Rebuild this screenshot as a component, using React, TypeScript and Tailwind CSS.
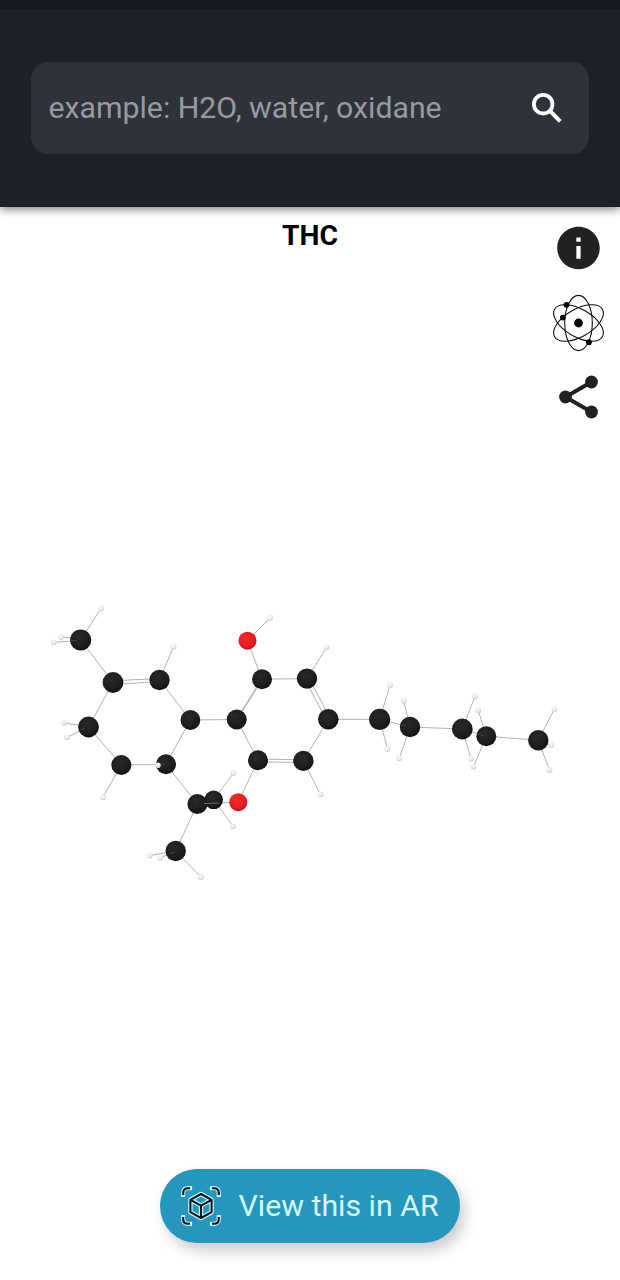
import { MdInfo } from 'react-icons/md';

type Element = 'C' | 'O' | 'H';

interface Atom {
    el: Element;
    x: number;
    y: number;
    r: number;
}

const carbons: [number, number, number][] = [
    [80.7, 640, 10.6],
    [113, 682.5, 10.4],
    [159.5, 680, 10.2],
    [88.5, 727, 10.4],
    [190.4, 720, 9.9],
    [121.3, 765, 10],
    [166, 764.3, 10],
    [213.7, 799.8, 9.3],
    [197.4, 804, 10],
    [175.7, 851, 10.2],
    [236.7, 719.5, 10],
    [262, 679.2, 10],
    [307, 678.6, 10.2],
    [328.3, 719.3, 10.3],
    [303.4, 760.9, 10.2],
    [258, 760.3, 10],
    [410, 727, 10.2],
    [379.7, 719.4, 10.6],
    [486.3, 736.3, 10],
    [462.3, 729, 10.4],
    [538.3, 740.2, 10.2],
];

const oxygens: [number, number, number][] = [
    [247.5, 640.7, 9],
    [238.3, 802.2, 9],
];

const hydrogens: [number, number][] = [
    [101, 608.5],
    [61, 637],
    [53.7, 642.3],
    [173.5, 646.7],
    [64, 722.8],
    [67, 737.3],
    [103, 797.2],
    [233.5, 773],
    [233, 826.3],
    [149.8, 855.5],
    [160, 858],
    [201, 877],
    [270, 618],
    [326.7, 647.3],
    [320.5, 794.5],
    [390, 685.2],
    [387.5, 749],
    [403.7, 700.8],
    [399.3, 758.3],
    [475, 696.3],
    [471, 758.8],
    [478.3, 710.3],
    [473.5, 766.5],
    [554.3, 709.3],
    [549.5, 770],
];

const atoms: Atom[] = [
    ...hydrogens.map(([x, y]): Atom => ({ el: 'H', x, y, r: 2.9 })),
    ...carbons.map(([x, y, r]): Atom => ({ el: 'C', x, y, r })),
    ...oxygens.map(([x, y, r]): Atom => ({ el: 'O', x, y, r })),
];

// x1, y1, x2, y2
const bonds: [number, number, number, number][] = [
    [80.7, 640, 101, 608.5],
    [80.7, 639, 61, 637],
    [80.7, 640.5, 53.7, 642.3],
    [80.7, 640, 113, 682.5],
    [113, 680.8, 159.5, 678.5],
    [113, 684.5, 159.5, 681.5],
    [159.5, 680, 173.5, 646.7],
    [159.5, 680, 190.4, 720],
    [113, 682.5, 88.5, 727],
    [88.5, 727, 64, 722.8],
    [88.5, 727, 67, 737.3],
    [88.5, 727, 121.3, 765],
    [121.3, 765, 103, 797.2],
    [121.3, 764.7, 166, 764.7],
    [166, 764.3, 190.4, 720],
    [166, 764.3, 197.4, 804],
    [197.4, 804, 175.7, 851],
    [197.4, 804, 238.3, 802.2],
    [213.7, 799.8, 233.5, 773],
    [213.7, 799.8, 233, 826.3],
    [175.7, 851, 149.8, 855.5],
    [175.7, 851, 160, 858],
    [175.7, 851, 201, 877],
    [190.4, 720, 236.7, 719.5],
    [236.4, 719.2, 261.7, 679],
    [237.1, 719.8, 262.3, 679.5],
    [262, 679.2, 247.5, 640.7],
    [247.5, 640.7, 270, 618],
    [262, 679.2, 307, 678.6],
    [307, 678.6, 326.7, 647.3],
    [308.8, 677.7, 330.2, 718.4],
    [305.2, 679.7, 326.5, 720.2],
    [328.3, 719.3, 303.4, 760.9],
    [303.4, 760.9, 320.5, 794.5],
    [258, 759.2, 303.4, 759.6],
    [258, 762, 303.4, 762.3],
    [258, 760.3, 236.7, 719.5],
    [258, 760.3, 238.3, 802.2],
    [328.3, 719.3, 379.7, 719.4],
    [379.7, 719.4, 390, 685.2],
    [379.7, 719.4, 387.5, 749],
    [379.7, 719.4, 410, 727],
    [410, 727, 403.7, 700.8],
    [410, 727, 399.3, 758.3],
    [410, 727, 462.3, 729],
    [462.3, 729, 475, 696.3],
    [462.3, 729, 471, 758.8],
    [462.3, 729, 486.3, 736.3],
    [486.3, 736.3, 478.3, 710.3],
    [486.3, 736.3, 473.5, 766.5],
    [486.3, 736.3, 538.3, 740.2],
    [538.3, 740.2, 554.3, 709.3],
    [538.3, 740.2, 549.5, 770],
    [538.3, 740.2, 551.3, 745.3],
];

// Faint bond ends that show over the carbon spheres
const glints: [number, number, number, number][] = [
    [71, 640.8, 77, 640.4],
    [81, 730, 85, 728.5],
    [161, 764.8, 165, 763.8],
    [170, 853.7, 175, 852],
    [401, 725, 406, 726],
    [478, 734, 483, 735.5],
];

function Molecule() {
    return (
        <svg viewBox="0 590 620 300" className="block h-[300px] w-full">
            <defs>
                <radialGradient id="C" cx="0.42" cy="0.35" r="0.65">
                    <stop offset="0" stopColor="#292929" />
                    <stop offset="0.7" stopColor="#1d1d1d" />
                    <stop offset="1" stopColor="#121212" />
                </radialGradient>
                <radialGradient id="O" cx="0.42" cy="0.35" r="0.65">
                    <stop offset="0" stopColor="#f5292b" />
                    <stop offset="0.7" stopColor="#e51e21" />
                    <stop offset="1" stopColor="#c41518" />
                </radialGradient>
                <radialGradient id="H" cx="0.42" cy="0.35" r="0.65">
                    <stop offset="0" stopColor="#fafafa" />
                    <stop offset="0.6" stopColor="#e9e9e9" />
                    <stop offset="1" stopColor="#cccccc" />
                </radialGradient>
            </defs>
            <g stroke="#a9a9a9" strokeWidth="0.9">
                {bonds.map(([x1, y1, x2, y2], i) => (
                    <line key={i} x1={x1} y1={y1} x2={x2} y2={y2} />
                ))}
            </g>
            {atoms.map((a, i) => (
                <circle key={i} cx={a.x} cy={a.y} r={a.r} fill={`url(#${a.el})`} />
            ))}
            <g stroke="#4a4a4a" strokeWidth="0.9">
                {glints.map(([x1, y1, x2, y2], i) => (
                    <line key={i} x1={x1} y1={y1} x2={x2} y2={y2} />
                ))}
            </g>
            <line x1="204" y1="803.6" x2="219" y2="803" stroke="#777777" strokeWidth="0.9" />
            {/* hydrogens in front of their carbon */}
            <circle cx="158" cy="765.3" r="2.8" fill="url(#H)" />
            <circle cx="551.5" cy="745.3" r="2.7" fill="url(#H)" />
        </svg>
    );
}

function SearchIcon() {
    return (
        <svg viewBox="0 0 30 30" className="size-[30px]" fill="none" stroke="white">
            <circle cx="11.2" cy="11.2" r="9.3" strokeWidth="3.8" />
            <path d="M17.6 17.6 28.3 28.3" strokeWidth="4" />
        </svg>
    );
}

function AtomIcon() {
    return (
        <svg viewBox="-28.5 -29 57 58" className="h-[58px] w-[57px]">
            <g fill="none" stroke="#111111" strokeWidth="1.1">
                <ellipse rx="13.8" ry="27.6" />
                <ellipse rx="13.8" ry="27.6" transform="rotate(60)" />
                <ellipse rx="13.8" ry="27.6" transform="rotate(-60)" />
            </g>
            <circle r="4.4" />
            <circle cx="-12" cy="-18.2" r="2.9" />
            <circle cx="-15.7" cy="-5.4" r="2.9" />
            <circle cx="10.4" cy="19.2" r="2.9" />
        </svg>
    );
}

function ShareIcon() {
    return (
        <svg viewBox="0.5 0 39 44" className="h-11 w-[39px]" fill="#212121">
            <path d="M33 7 7 22l26 15" fill="none" stroke="#212121" strokeWidth="4" />
            <circle cx="33" cy="7" r="6.4" />
            <circle cx="7" cy="22" r="6.4" />
            <circle cx="33" cy="37" r="6.4" />
        </svg>
    );
}

const corners = 'M-17.8-11v-2q0-4.8 4.8-4.8h2 M17.8-11v-2q0-4.8-4.8-4.8h-2 M-17.8 11v2q0 4.8 4.8 4.8h2 M17.8 11v2q0 4.8-4.8 4.8h-2';
const cube = 'M0-12 10.6-6.2V6.2L0 12-10.6 6.2V-6.2Z M-10.6-6.2 0-.4 10.6-6.2 M0-.4V12';

function ArIcon() {
    return (
        <svg viewBox="-21 -21 42 42" className="size-[42px]" fill="none" strokeLinejoin="round">
            <path d={corners} stroke="#c9f2fb" strokeWidth="4.2" strokeLinecap="square" />
            <path d={cube} stroke="#c9f2fb" strokeWidth="4.4" />
            <path d={corners} stroke="#0b1419" strokeWidth="2.1" />
            <path d={cube} stroke="#0b1419" strokeWidth="2" />
        </svg>
    );
}

export default function App() {
    return (
        <div className="flex h-[1280px] w-[620px] flex-col overflow-hidden bg-white font-[Roboto,sans-serif]">
            <header className="z-10 flex h-[207px] shrink-0 flex-col bg-[#1d2027] shadow-[0_3px_8px_rgba(0,0,0,0.45)]">
                <div className="h-[9px] bg-[#15191d]" />
                <div className="mx-[31px] mt-[53px] flex h-[92px] items-center justify-between rounded-[17px] bg-[#2e333a] pr-[27px] pl-[17.5px]">
                    <span className="text-[30.25px] leading-none whitespace-nowrap text-[#989a9e]">example: H2O, water, oxidane</span>
                    <SearchIcon />
                </div>
            </header>

            <main className="flex flex-1 flex-col">
                <div className="grid h-[383px] grid-cols-[83px_1fr_83px]">
                    <h1 className="col-start-2 pt-[13px] text-center text-[28.3px] leading-8 font-bold text-black">THC</h1>
                    <div className="flex flex-col items-center pt-[15px]">
                        <MdInfo className="h-[52px] w-[51px] text-[#212121]" />
                        <div className="mt-[19.5px]">
                            <AtomIcon />
                        </div>
                        <div className="mt-[23.5px]">
                            <ShareIcon />
                        </div>
                    </div>
                </div>

                <Molecule />

                <button className="mx-auto mt-[279px] flex h-[74px] w-[300px] items-center rounded-full bg-[#2596be] pl-5 shadow-[5px_8px_14px_rgba(0,0,0,0.2)]">
                    <ArIcon />
                    <span className="ml-[16.5px] text-[30.3px] leading-none whitespace-nowrap text-[#d5f8fd]">View this in AR</span>
                </button>
            </main>
        </div>
    );
}
